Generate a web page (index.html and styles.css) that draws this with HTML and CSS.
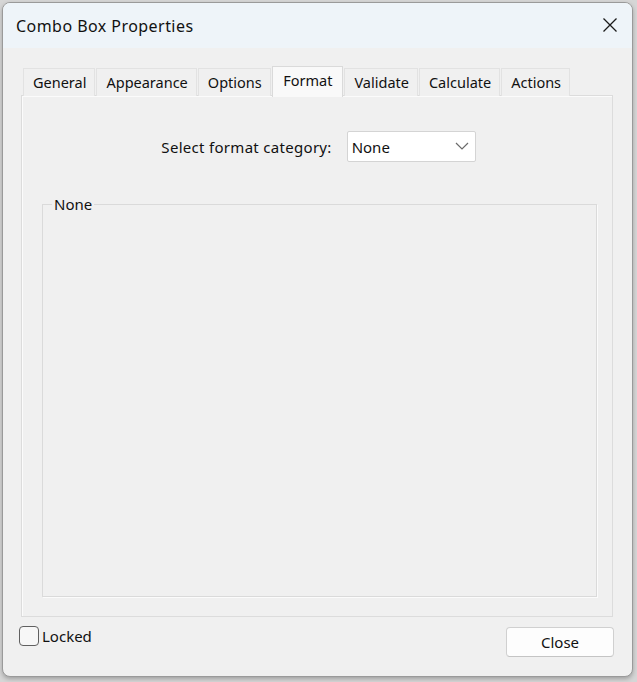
FILE: index.html
```html
<!DOCTYPE html>
<html>
<head>
<meta charset="utf-8">
<title>Combo Box Properties</title>
<link rel="stylesheet" href="styles.css">
</head>
<body>
<div class="window">
  <div class="titlebar">
    <span class="title">Combo Box Properties</span>
    <span class="close-x">
      <svg width="16" height="16" viewBox="0 0 16 16"><path d="M1.5 1.5 L14.5 14.5 M14.5 1.5 L1.5 14.5" stroke="#1a1a1a" stroke-width="1.3" fill="none"/></svg>
    </span>
  </div>
  <div class="content">
    <div class="tabs">
      <div class="tab">General</div>
      <div class="tab">Appearance</div>
      <div class="tab">Options</div>
      <div class="tab active">Format</div>
      <div class="tab">Validate</div>
      <div class="tab">Calculate</div>
      <div class="tab">Actions</div>
    </div>
    <div class="panel">
      <div class="category-row">
        <span class="label">Select format category:</span>
        <div class="select">
          <span>None</span>
          <svg class="chev" width="14" height="8" viewBox="0 0 14 8"><path d="M1 1 L7 7 L13 1" stroke="#6b6b6b" stroke-width="1.2" fill="none"/></svg>
        </div>
      </div>
      <fieldset class="group">
        <legend>None</legend>
      </fieldset>
    </div>
    <div class="bottom-row">
      <label class="check"><span class="box"></span><span>Locked</span></label>
      <button class="btn">Close</button>
    </div>
  </div>
</div>
</body>
</html>
```

FILE: styles.css
```css
html, body {
  margin: 0;
  padding: 0;
}
body {
  width: 637px;
  height: 682px;
  background: #d6d6d6;
  font-family: "Noto Sans", "Open Sans", sans-serif;
  color: #111;
  overflow: hidden;
}
.window {
  margin: 2px 0 0 2px;
  width: 631px;
  height: 675px;
  box-sizing: border-box;
  border: 1px solid #9a9a9a;
  border-radius: 8px;
  overflow: hidden;
  background: #f0f0f0;
  display: flex;
  flex-direction: column;
  box-shadow: 0 2px 4px rgba(0,0,0,0.25);
}
.titlebar {
  height: 45px;
  background: #eef4f9;
  display: flex;
  align-items: center;
  justify-content: space-between;
  padding: 0 14px 0 13px;
}
.title {
  font-size: 16px;
  color: #111;
  letter-spacing: 0.45px;
}
.close-x {
  display: flex;
  width: 16px;
  height: 16px;
  margin-top: -1px;
}
.content {
  flex: 1;
  display: flex;
  flex-direction: column;
  padding: 18px 19px 0 18px;
}
.tabs {
  display: flex;
  padding-left: 2px;
  height: 30px;
  align-items: flex-end;
  position: relative;
  z-index: 1;
  margin-bottom: -1px;
}
.tab {
  height: 28px;
  box-sizing: border-box;
  border: 1px solid #e2e2e2;
  border-bottom: none;
  margin-right: 1px;
  padding: 0 8px 0 9px;
  font-size: 14.5px;
  line-height: 27px;
  color: #111;
  background: #f0f0f0;
}
.tab.active {
  height: 31px;
  background: #f9f9f9;
  border-color: #dadada;
  line-height: 26px;
  margin-bottom: -1px;
  padding: 0 10px 3px 10.5px;
}
.panel {
  height: 522px;
  box-sizing: border-box;
  border: 1px solid #dcdcdc;
  box-shadow: inset 1px 1px 0 #fbfbfb;
  background: #f0f0f0;
  display: flex;
  flex-direction: column;
}
.category-row {
  display: flex;
  align-items: center;
  justify-content: center;
  gap: 15px;
  margin-top: 35px;
  padding-left: 3px;
}
.label {
  font-size: 15px;
  letter-spacing: 0.3px;
}
.select {
  width: 129px;
  height: 31px;
  box-sizing: border-box;
  background: #ffffff;
  border: 1px solid #d4d4d4;
  border-radius: 2px;
  display: flex;
  align-items: center;
  justify-content: space-between;
  padding: 0 6px 0 4px;
  font-size: 15px;
}
.chev {
  display: block;
  margin-top: -2px;
}
.group {
  margin: 33px 15px 0 20px;
  padding: 0;
  height: 402px;
  box-sizing: border-box;
  border: 1px solid #dadada;
  box-shadow: 1px 1px 0 #fbfbfb;
}
.group legend {
  font-size: 15px;
  line-height: 18px;
  padding: 0 2px;
  margin-left: 9px;
}
.bottom-row {
  display: flex;
  justify-content: space-between;
  align-items: flex-start;
  margin: 9px -1px 0 -2px;
}
.check {
  display: flex;
  align-items: center;
  font-size: 15px;
  gap: 3px;
  margin-top: 0;
}
.box {
  width: 20px;
  height: 20px;
  box-sizing: border-box;
  border: 1.5px solid #606060;
  border-radius: 4px;
  background: #f7f7f7;
}
.btn {
  width: 108px;
  height: 30px;
  margin-top: 1px;
  background: #fdfdfd;
  border: 1px solid #d0d0d0;
  border-bottom-color: #c4c4c4;
  border-radius: 4px;
  font-family: inherit;
  font-size: 15px;
  color: #111;
  padding: 0;
}
```
